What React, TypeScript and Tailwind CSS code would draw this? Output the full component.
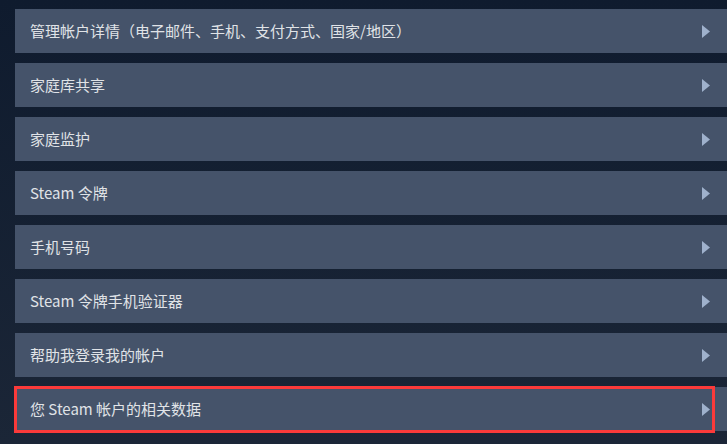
import React, { FC } from 'react';

const items = [
	'管理帐户详情（电子邮件、手机、支付方式、国家/地区）',
	'家庭库共享',
	'家庭监护',
	'Steam 令牌',
	'手机号码',
	'Steam 令牌手机验证器',
	'帮助我登录我的帐户',
	'您 Steam 帐户的相关数据',
];

const Arrow: FC = () => (
	<svg width="8" height="13" viewBox="0 0 8 13" className="shrink-0">
		<polygon points="0,0 8,6.5 0,13" fill="#9fb1cc" />
	</svg>
);

const Row: FC<{ label: string; highlight?: boolean }> = ({ label, highlight }) => (
	<div className="relative">
		<div className="flex h-[44px] items-center justify-between bg-[#45536a] pl-[15px] pr-[17px] text-[15px] text-[#e0e3e7]">
			<span>{label}</span>
			<Arrow />
		</div>
		{highlight && (
			<div className="pointer-events-none absolute -top-[1px] -bottom-[2px] -left-[1px] right-[12px] border-[3px] border-[#fb3a3a]" />
		)}
	</div>
);

export default function App() {
	return (
		<div
			className="flex h-[444px] w-[727px] flex-col gap-[10px] overflow-hidden bg-gradient-to-b from-[#0f1b2e] to-[#1b2637] pt-[9px] pl-[15px]"
			style={{ fontFamily: '"Noto Sans CJK SC", "Noto Sans", sans-serif' }}
		>
			{items.map((label, i) => (
				<Row key={label} label={label} highlight={i === items.length - 1} />
			))}
		</div>
	);
}
